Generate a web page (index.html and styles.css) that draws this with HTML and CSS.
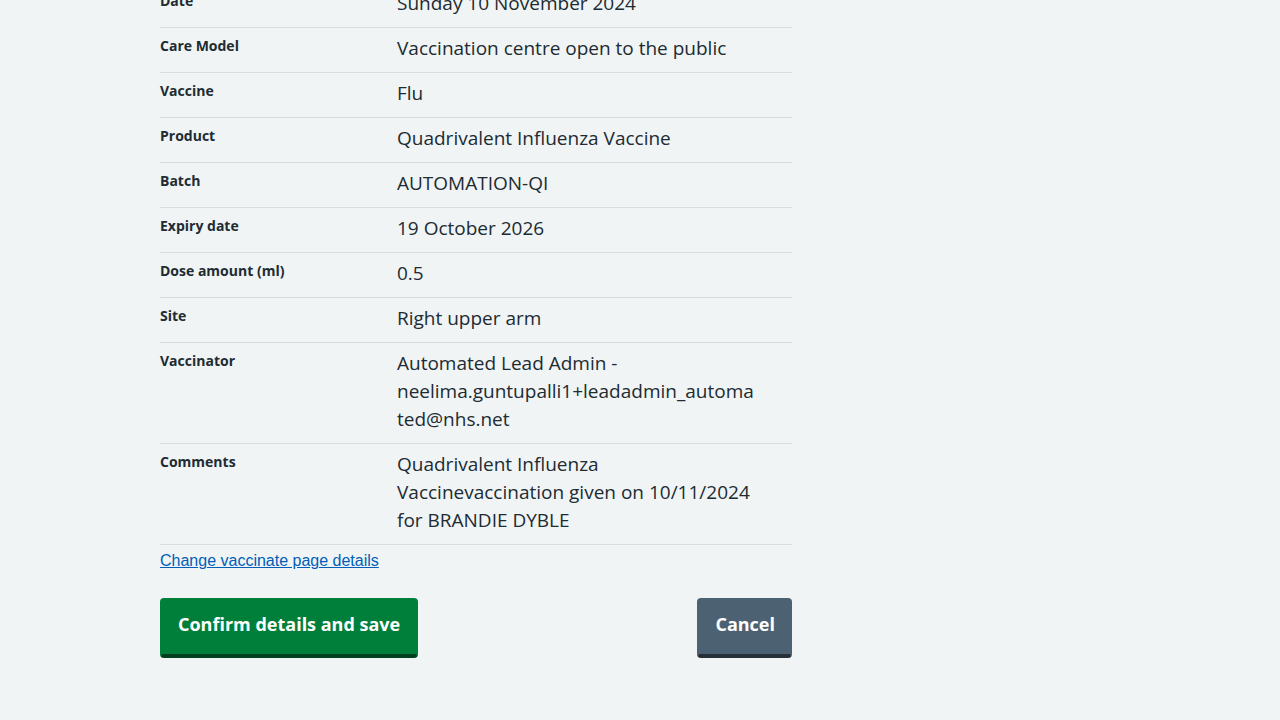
FILE: index.html
```html
<!DOCTYPE html>
<html lang="en">
<head>
<meta charset="utf-8">
<title>Check and confirm</title>
<link rel="stylesheet" href="styles.css">
</head>
<body>
<main class="page">
  <dl class="summary">
    <div class="row"><dt class="key">Date</dt><dd class="value">Sunday 10 November 2024</dd></div>
    <div class="row"><dt class="key">Care Model</dt><dd class="value">Vaccination centre open to the public</dd></div>
    <div class="row"><dt class="key">Vaccine</dt><dd class="value">Flu</dd></div>
    <div class="row"><dt class="key">Product</dt><dd class="value">Quadrivalent Influenza Vaccine</dd></div>
    <div class="row"><dt class="key">Batch</dt><dd class="value">AUTOMATION-QI</dd></div>
    <div class="row"><dt class="key">Expiry date</dt><dd class="value">19 October 2026</dd></div>
    <div class="row"><dt class="key">Dose amount (ml)</dt><dd class="value">0.5</dd></div>
    <div class="row"><dt class="key">Site</dt><dd class="value">Right upper arm</dd></div>
    <div class="row"><dt class="key">Vaccinator</dt><dd class="value">Automated Lead Admin -<br>neelima.guntupalli1+leadadmin_automa<wbr>ted@nhs.net</dd></div>
    <div class="row"><dt class="key">Comments</dt><dd class="value">Quadrivalent Influenza<br>Vaccinevaccination given on 10/11/2024<br>for BRANDIE DYBLE</dd></div>
  </dl>
  <p class="change"><a href="#" class="link">Change vaccinate page details</a></p>
  <div class="actions">
    <button class="btn btn-primary" type="button">Confirm details and save</button>
    <button class="btn btn-secondary" type="button">Cancel</button>
  </div>
</main>
</body>
</html>
```
FILE: styles.css
```css
html, body {
  margin: 0;
  padding: 0;
  background: #f0f4f5;
  color: #212b32;
  font-family: "Open Sans", "Noto Sans", sans-serif;
}
.page {
  width: 632px;
  margin: -17px 0 0 160px;
}
.summary {
  margin: 0;
}
.row {
  display: grid;
  grid-template-columns: 237px 1fr;
  border-bottom: 1px solid #d8dde0;
}
.key {
  padding: 8px 0;
  font-size: 14px;
  font-weight: 700;
  line-height: 20px;
}
.value {
  margin: 0;
  padding: 6px 24px 10px 0;
  font-size: 19px;
  line-height: 28px;
}
.change {
  margin: 0;
  padding-top: 6px;
  font-family: "Liberation Sans", Arial, sans-serif;
  font-size: 16px;
  line-height: 20px;
}
.link {
  color: #005eb8;
  text-decoration: underline;
}
.actions {
  display: flex;
  justify-content: space-between;
  align-items: flex-start;
  margin-top: 27px;
}
.btn {
  font-family: "Open Sans", "Noto Sans", sans-serif;
  font-size: 18px;
  font-weight: 700;
  line-height: 28px;
  color: #fff;
  border: 2px solid transparent;
  border-bottom-width: 4px;
  border-radius: 4px;
  padding: 10px 16px 16px;
  margin: 0;
  cursor: pointer;
}
.btn-primary {
  background: #007f3b;
  border-bottom-color: #00401e;
}
.btn-secondary {
  background: #4c6272;
  border-bottom-color: #263139;
  padding: 10px 15px 16px 16px;
}
```
